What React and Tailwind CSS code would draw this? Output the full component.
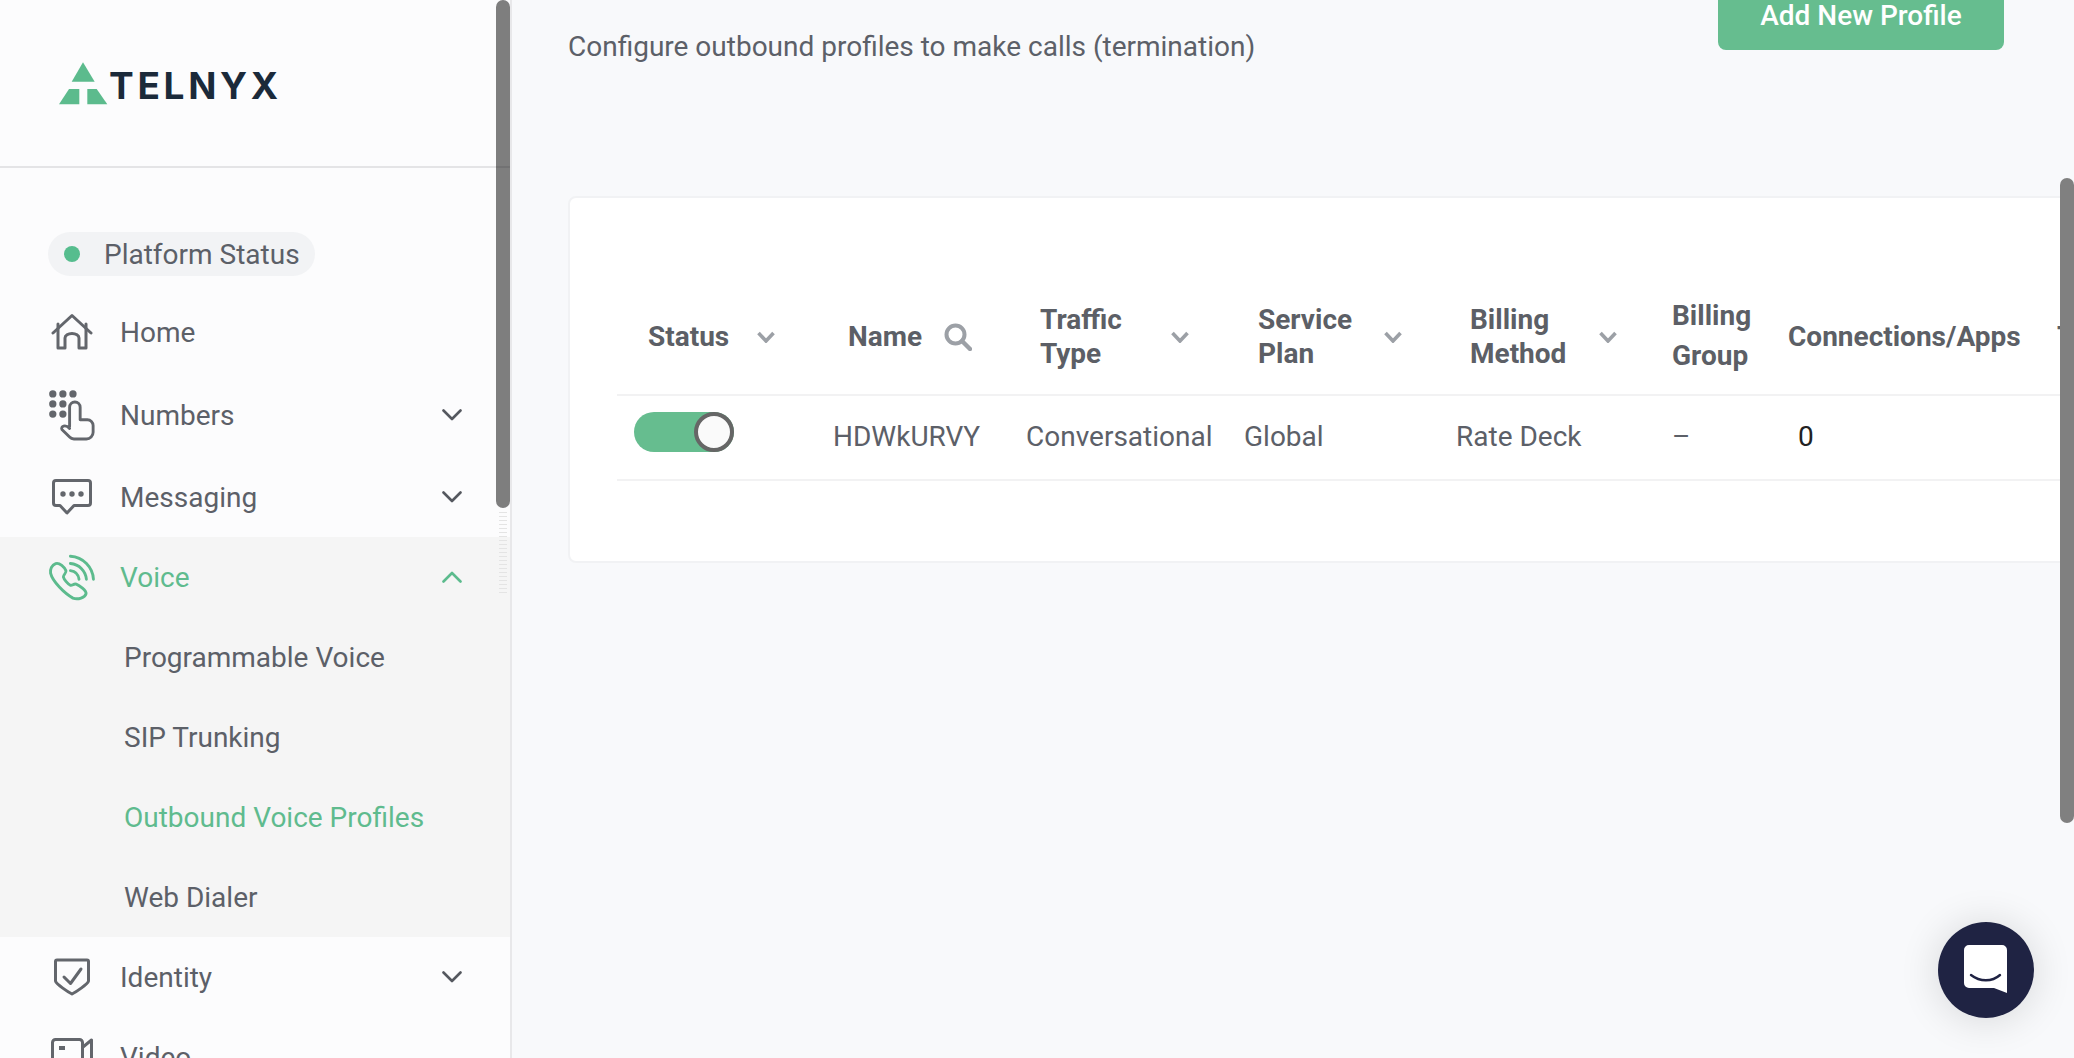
import React from 'react';

const iconStroke = '#63666c';
const green = '#5cbb8d';

function HomeIcon() {
  return (
    <svg width="42" height="38" viewBox="51 313 42 38" fill="none" stroke={iconStroke} strokeWidth="3" strokeLinejoin="round" strokeLinecap="round">
      <path d="M53 333 L72 315.5 L91 333" />
      <path d="M58 324 V348 H65 V338 a7 4.5 0 0 1 14 0 V348 H86 V324" />
    </svg>
  );
}

function NumbersIcon() {
  return (
    <svg width="50" height="54" viewBox="47 387 50 54" fill="none" stroke={iconStroke} strokeWidth="3" strokeLinejoin="round" strokeLinecap="round">
      <g fill={iconStroke} stroke="none">
        <circle cx="52" cy="392" r="3.8" />
        <circle cx="62.5" cy="392" r="3.8" />
        <circle cx="73" cy="392" r="3.8" />
        <circle cx="52" cy="402.5" r="3.8" />
        <circle cx="62.5" cy="402.5" r="3.8" />
        <circle cx="52" cy="413" r="3.8" />
        <circle cx="62.5" cy="413" r="3.8" />
      </g>
      <path d="M69.5 426 V406 a5.5 5.5 0 0 1 11 0 V419 H88 a6 6 0 0 1 6 6 V432 a7 7 0 0 1 -7 7 H74 a6 6 0 0 1 -4.5 -2 L61.5 429 C60 426 65 423 69.5 428" />
    </svg>
  );
}

function MessagingIcon() {
  return (
    <svg width="42" height="38" viewBox="51 478 42 38" fill="none" stroke={iconStroke} strokeWidth="3" strokeLinejoin="round">
      <path d="M56 480.5 H88 a2.5 2.5 0 0 1 2.5 2.5 V503 a2.5 2.5 0 0 1 -2.5 2.5 H74 L67 513 L60 505.5 H56 a2.5 2.5 0 0 1 -2.5 -2.5 V483 a2.5 2.5 0 0 1 2.5 -2.5 Z" />
      <g fill={iconStroke} stroke="none">
        <circle cx="63" cy="494" r="2.7" />
        <circle cx="72" cy="494" r="2.7" />
        <circle cx="81" cy="494" r="2.7" />
      </g>
    </svg>
  );
}

function VoiceIcon() {
  return (
    <svg width="50" height="50" viewBox="48 33 150 150" fill="none" stroke={green} strokeWidth="9" strokeLinecap="round" strokeLinejoin="round">
      <path d="M72 66 C60 70 54 84 56 96 C62 122 100 160 126 174 C142 180 164 172 167 160 C168 150 146 134 136 130 C128 128 124 136 118 134 C110 130 98 116 96 108 C96 100 106 96 104 88 C100 78 84 62 72 66 Z" />
      <path d="M118 43 C158 45 188 78 190 115" />
      <path d="M118 66 C146 68 166 90 168 115" />
      <path d="M118 88 C132 90 143 100 145 115" />
    </svg>
  );
}

function IdentityIcon() {
  return (
    <svg width="38" height="40" viewBox="53 957 38 40" fill="none" stroke={iconStroke} strokeWidth="3" strokeLinejoin="round" strokeLinecap="round">
      <path d="M57 960 H87 a1.5 1.5 0 0 1 1.5 1.5 V981 C88 984 76 992 72 994 C68 992 56 984 55.5 981 V961.5 a1.5 1.5 0 0 1 1.5 -1.5 Z" />
      <path d="M64 977 L70.5 983.5 L81 969" />
    </svg>
  );
}

function VideoIcon() {
  return (
    <svg width="44" height="40" viewBox="50 1040 44 40" fill="none" stroke={iconStroke} strokeWidth="3" strokeLinejoin="round">
      <rect x="52.5" y="1042.5" width="30" height="34" rx="3" />
      <path d="M83 1050 L91.5 1043 V1076 L83 1069" />
      <rect x="59" y="1049" width="6" height="4" fill={iconStroke} stroke="none" />
    </svg>
  );
}

function Chevron({ up, color }) {
  return (
    <svg width="20" height="12" viewBox="0 0 20 12" fill="none" stroke={color} strokeWidth="2.6" strokeLinecap="round" strokeLinejoin="round">
      <path d={up ? 'M1.5 10.5 L10 2 L18.5 10.5' : 'M1.5 1.5 L10 10 L18.5 1.5'} />
    </svg>
  );
}

function SortChevron() {
  return (
    <svg width="18" height="12" viewBox="0 0 18 12" fill="none" stroke="#9ca0a6" strokeWidth="3.6" strokeLinejoin="miter">
      <path d="M1.5 2 L9 10 L16.5 2" />
    </svg>
  );
}

function SearchIcon() {
  return (
    <svg width="28" height="28" viewBox="0 0 28 28" fill="none" stroke="#9ca0a6" strokeWidth="4">
      <circle cx="11.5" cy="11.5" r="9" />
      <path d="M18 18 L26 26" strokeLinecap="round" strokeWidth="4.4" />
    </svg>
  );
}

function NavRow({ icon, label, open, active, className = '' }) {
  return (
    <div className={`flex h-[80px] items-center pl-[48px] pr-[48px] text-[28px] ${active ? 'text-[#5fbb8e]' : 'text-[#5c6068]'} ${className}`}>
      <div className="flex w-[48px] shrink-0 items-center justify-center">{icon}</div>
      <span className="ml-[24px] flex-1 pt-[2px]">{label}</span>
      {open !== undefined && <Chevron up={open} color={active ? green : '#55585f'} />}
    </div>
  );
}

const voiceItems = [
  { label: 'Programmable Voice' },
  { label: 'SIP Trunking' },
  { label: 'Outbound Voice Profiles', active: true },
  { label: 'Web Dialer' },
];

function Sidebar() {
  return (
    <aside className="relative h-full w-[512px] shrink-0 overflow-hidden border-r-2 border-[#e8e8ea] bg-[#fcfcfd]">
      <div className="flex h-[168px] items-center border-b-2 border-[#e4e4e6] pl-[59px]">
        <svg width="49" height="43" viewBox="59 62 49 43" fill={green}>
          <path d="M83 62.3 L94.7 81.7 H71.7 Z" />
          <path d="M69 89 H79.3 V104.3 H59 Z" />
          <path d="M87.3 89 H96.7 L107.3 104.3 H87.3 Z" />
        </svg>
        <span className="ml-[1px] mt-[4px] font-['Inter',sans-serif] text-[37px] font-bold leading-none tracking-[0.1em] text-[#1b2a3a]">TELNYX</span>
      </div>

      <div className="ml-[48px] mt-[64px] flex h-[44px] w-[267px] items-center rounded-full bg-[#f2f3f5] pl-[16px] text-[28px] text-[#5c6068]">
        <span className="h-[16px] w-[16px] rounded-full bg-[#56bd8e]" />
        <span className="ml-[24px] pt-[2px]">Platform Status</span>
      </div>

      <NavRow icon={<HomeIcon />} label="Home" className="mt-[16px]" />
      <NavRow icon={<NumbersIcon />} label="Numbers" open={false} className="mt-[3px]" />
      <NavRow icon={<MessagingIcon />} label="Messaging" open={false} className="mt-[2px]" />

      <div className="bg-[#f5f5f5]">
        <NavRow icon={<VoiceIcon />} label="Voice" open active />
        {voiceItems.map((item) => (
          <div key={item.label} className={`flex h-[80px] items-center pl-[124px] pt-[2px] text-[28px] ${item.active ? 'text-[#5fbb8e]' : 'text-[#5c6068]'}`}>
            {item.label}
          </div>
        ))}
      </div>

      <NavRow icon={<IdentityIcon />} label="Identity" open={false} />
      <NavRow icon={<VideoIcon />} label="Video" />

      <div className="absolute right-0 top-0 h-[508px] w-[14px] rounded-full bg-black/50" />
      <div className="absolute right-[3px] top-[512px] h-[82px] w-[8px] bg-[repeating-linear-gradient(to_bottom,#e4e4e4_0px,#e4e4e4_1px,transparent_1px,transparent_4px)]" />
    </aside>
  );
}

const columns = [
  { label: 'Status', width: 196, pl: 'pl-[31px]', pr: 'pr-[38px]', icon: <SortChevron /> },
  { label: 'Name', width: 193, pl: 'pl-[35px]', pr: 'pr-[34px]', icon: <SearchIcon /> },
  { label: ['Traffic', 'Type'], width: 218, pl: 'pl-[34px]', pr: 'pr-[35px]', icon: <SortChevron /> },
  { label: ['Service', 'Plan'], width: 212, pl: 'pl-[34px]', pr: 'pr-[34px]', icon: <SortChevron /> },
  { label: ['Billing', 'Method'], width: 216, pl: 'pl-[34px]', pr: 'pr-[35px]', icon: <SortChevron /> },
  { label: ['Billing', 'Group'], width: 116, pl: 'pl-[20px]', pr: 'pr-0', tall: true },
  { label: 'Connections/Apps', width: 269, pl: 'pl-[20px]', pr: 'pr-0' },
  { label: 'Tags', width: 200, pl: 'pl-[20px]', pr: 'pr-0' },
];

function HeaderCell({ col }) {
  const lines = Array.isArray(col.label) ? col.label : [col.label];
  return (
    <th className={`h-[105px] p-0 text-left align-middle ${col.tall ? 'pb-[12px]' : 'pb-[10px]'} ${col.pl} ${col.pr}`}>
      <div className="flex items-center justify-between">
        <div className={`text-[28px] font-bold text-[#5c5f66] ${col.tall ? 'leading-[40px]' : 'leading-[34px]'}`}>
          {lines.map((line) => (
            <div key={line}>{line}</div>
          ))}
        </div>
        {col.icon}
      </div>
    </th>
  );
}

function Toggle() {
  return (
    <div className="mb-[12px] flex h-[40px] w-[100px] justify-end rounded-full bg-[#66bd8f]">
      <span className="h-[40px] w-[40px] rounded-full border-4 border-[#666666] bg-[#fafafa]" />
    </div>
  );
}

function ProfilesTable() {
  return (
    <table className="w-[1620px] table-fixed border-collapse">
      <colgroup>
        {columns.map((col, i) => (
          <col key={i} style={{ width: col.width }} />
        ))}
      </colgroup>
      <thead>
        <tr>
          {columns.map((col, i) => (
            <HeaderCell key={i} col={col} />
          ))}
        </tr>
      </thead>
      <tbody>
        <tr className="h-[85px] border-y-2 border-[#f2f2f3] text-[28px] text-[#5c6068]">
          <td className="pl-[17px]"><Toggle /></td>
          <td className="pb-[2px] pl-[20px]">HDWkURVY</td>
          <td className="pb-[2px] pl-[20px]">Conversational</td>
          <td className="pb-[2px] pl-[20px]">Global</td>
          <td className="pb-[2px] pl-[20px]">Rate Deck</td>
          <td className="pb-[2px] pl-[20px]">–</td>
          <td className="pb-[2px] pl-[30px] text-[#222222]">0</td>
          <td />
        </tr>
      </tbody>
    </table>
  );
}

export default function App() {
  return (
    <div className="relative flex h-[1058px] w-full overflow-hidden bg-[#f8f9fb] font-['Roboto',sans-serif]">
      <Sidebar />

      <main className="min-w-0 flex-1 overflow-hidden pl-[56px]">
        <div className="-mt-[20px] flex h-[216px] items-start justify-between pr-[70px]">
          <p className="mt-[49px] text-[28px] leading-[36px] text-[#5c6068]">
            Configure outbound profiles to make calls (termination)
          </p>
          <button className="h-[70px] w-[286px] rounded-lg bg-[#66bd8f] pt-[2px] text-[28px] font-medium text-white">
            Add New Profile
          </button>
        </div>

        <div className="h-[367px] w-[1700px] rounded-lg border-2 border-[#f1f2f4] bg-white pl-[47px] pt-[92px]">
          <ProfilesTable />
        </div>
      </main>

      <div className="absolute right-0 top-[178px] h-[645px] w-[14px] rounded-full bg-[#808080]" />

      <div className="absolute left-[1938px] top-[922px] flex h-[96px] w-[96px] items-center justify-center rounded-full bg-[#1f2343] shadow-[0_2px_40px_rgba(0,0,0,0.14)]">
        <svg width="44" height="50" viewBox="0 0 44 50">
          <path fill="#ffffff" d="M5 0 H38 a5 5 0 0 1 5 5 V48 L30 43 H5 a5 5 0 0 1 -5 -5 V5 a5 5 0 0 1 5 -5 Z" />
          <path fill="none" stroke="#1f2343" strokeWidth="2.4" strokeLinecap="round" d="M7 30 C16 37 28 37 36 30" />
        </svg>
      </div>
    </div>
  );
}
